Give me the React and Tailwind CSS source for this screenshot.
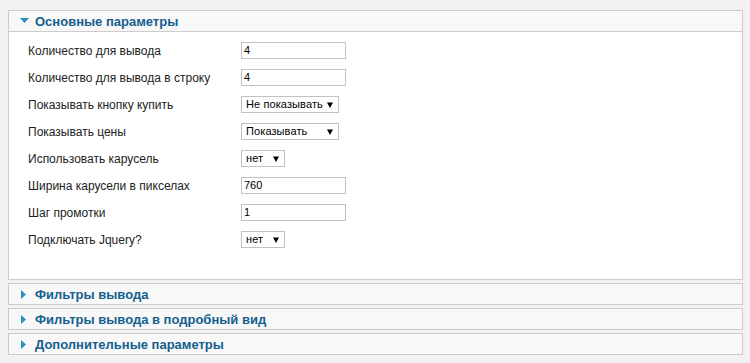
import React from 'react';

const font = { fontFamily: '"Liberation Sans", Arial, sans-serif' };

function TextField({ value }) {
  return (
    <div className="w-[105px] h-[17px] border border-[#c2c2c2] bg-white flex items-center pl-[2px] text-[11px] text-black leading-none">
      {value}
    </div>
  );
}

function SelectField({ value, width }) {
  return (
    <div
      className={`${width} h-[17px] border border-[#c2c2c2] bg-white flex items-center justify-between pl-[4px] pr-[5px] text-[11px] tracking-[0.1px] text-black leading-none whitespace-nowrap`}
    >
      <span>{value}</span>
      <svg width="6" height="6" viewBox="0 0 6 6" className="shrink-0">
        <path d="M0 0.5 H6 L3 6 Z" fill="#000" />
      </svg>
    </div>
  );
}

const rows = [
  { label: 'Количество для вывода', type: 'text', value: '4' },
  { label: 'Количество для вывода в строку', type: 'text', value: '4' },
  { label: 'Показывать кнопку купить', type: 'select', value: 'Не показывать', width: 'w-[98px]' },
  { label: 'Показывать цены', type: 'select', value: 'Показывать', width: 'w-[98px]' },
  { label: 'Использовать карусель', type: 'select', value: 'нет', width: 'w-[44px]' },
  { label: 'Ширина карусели в пикселах', type: 'text', value: '760' },
  { label: 'Шаг промотки', type: 'text', value: '1' },
  { label: 'Подключать Jquery?', type: 'select', value: 'нет', width: 'w-[44px]' },
];

function PanelHeader({ title, open }) {
  return (
    <div className="h-[20px] bg-[#f8f8f8] flex items-center pl-[11px] gap-[6px]">
      {open ? (
        <svg width="9" height="6" viewBox="0 0 9 6">
          <path d="M0 0 H9 L4.5 5 Z" fill="#2a8fc4" />
        </svg>
      ) : (
        <svg width="9" height="9" viewBox="0 0 9 9">
          <path d="M0 0 L5 4.5 L0 9 Z" fill="#2a8fc4" transform="translate(1 0)" />
        </svg>
      )}
      <span className="text-[13px] font-bold text-[#14608f] leading-none">{title}</span>
    </div>
  );
}

export default function App() {
  return (
    <div className="w-[750px] h-[363px] bg-[#f2f2f2] pt-[10px] pl-[8px] pr-[7px]" style={font}>
      <div className="border border-[#cccccc] bg-white">
        <PanelHeader title="Основные параметры" open />
        <div className="border-t border-[#cccccc] pt-[10px] pb-[31px] pl-[19px] flex flex-col gap-[10px]">
          {rows.map((r, i) => (
            <div key={i} className="flex items-center h-[17px]">
              <div className="w-[213px] text-[12px] text-[#222] leading-none">{r.label}</div>
              {r.type === 'text' ? (
                <TextField value={r.value} />
              ) : (
                <SelectField value={r.value} width={r.width} />
              )}
            </div>
          ))}
        </div>
      </div>
      {['Фильтры вывода', 'Фильтры вывода в подробный вид', 'Дополнительные параметры'].map((t) => (
        <div key={t} className="mt-[3px] border border-[#cccccc]">
          <PanelHeader title={t} />
        </div>
      ))}
    </div>
  );
}
